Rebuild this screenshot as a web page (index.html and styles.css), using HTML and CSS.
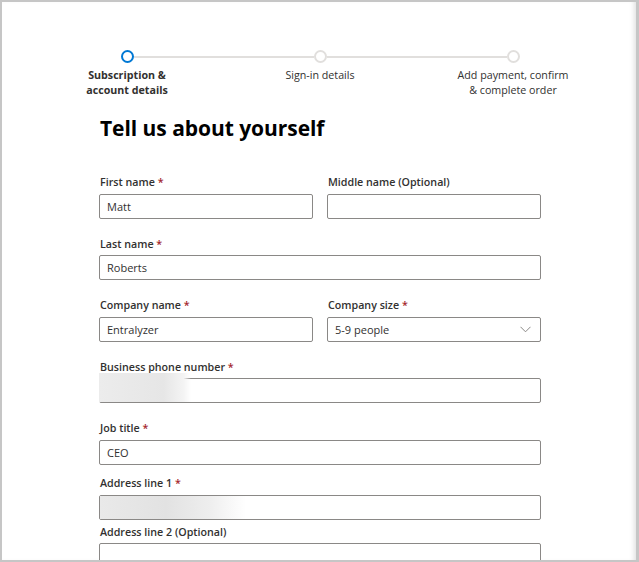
FILE: index.html
```html
<!DOCTYPE html>
<html lang="en">
<head>
<meta charset="utf-8">
<title>Tell us about yourself</title>
<link rel="stylesheet" href="styles.css">
</head>
<body>
<div class="window">
  <div class="steps">
    <div class="step active">
      <div class="track"><span class="line hidden"></span><span class="dot"></span><span class="line"></span></div>
      <div class="step-label strong">Subscription &amp;<br>account details</div>
    </div>
    <div class="step">
      <div class="track"><span class="line"></span><span class="dot"></span><span class="line"></span></div>
      <div class="step-label">Sign-in details</div>
    </div>
    <div class="step">
      <div class="track"><span class="line"></span><span class="dot"></span><span class="line hidden"></span></div>
      <div class="step-label">Add payment, confirm<br>&amp; complete order</div>
    </div>
  </div>

  <form class="form">
    <h1 class="title">Tell us about yourself</h1>

    <div class="row two">
      <div class="field">
        <label class="label">First name <span class="req">*</span></label>
        <div class="input">Matt</div>
      </div>
      <div class="field">
        <label class="label">Middle name (Optional)</label>
        <div class="input"></div>
      </div>
    </div>

    <div class="row">
      <div class="field">
        <label class="label">Last name <span class="req">*</span></label>
        <div class="input">Roberts</div>
      </div>
    </div>

    <div class="row two">
      <div class="field">
        <label class="label">Company name <span class="req">*</span></label>
        <div class="input">Entralyzer</div>
      </div>
      <div class="field">
        <label class="label">Company size <span class="req">*</span></label>
        <div class="input select">5-9 people
          <svg class="chev" width="11" height="7" viewBox="0 0 11 7"><path d="M0.5 0.8 L5.5 5.8 L10.5 0.8" fill="none" stroke="#8a8886" stroke-width="1"/></svg>
        </div>
      </div>
    </div>

    <div class="row">
      <div class="field">
        <label class="label">Business phone number <span class="req">*</span></label>
        <div class="input blurwrap"><span class="blur phone"></span></div>
      </div>
    </div>

    <div class="row tight">
      <div class="field">
        <label class="label">Job title <span class="req">*</span></label>
        <div class="input">CEO</div>
      </div>
    </div>

    <div class="row tighter">
      <div class="field">
        <label class="label">Address line 1 <span class="req">*</span></label>
        <div class="input blurwrap"><span class="blur addr"></span></div>
      </div>
    </div>

    <div class="row last">
      <div class="field">
        <label class="label">Address line 2 (Optional)</label>
        <div class="input"></div>
      </div>
    </div>
  </form>
</div>
</body>
</html>
```

FILE: styles.css
```css
* { box-sizing: border-box; }
html, body { margin: 0; padding: 0; background: #c8c8c8; }
body {
  font-family: "Open Sans", "Noto Sans", "Liberation Sans", sans-serif;
  color: #323130;
}
.window {
  width: 639px;
  height: 562px;
  background: #fff;
  border: 2px solid #c6c6c6;
  border-right-width: 3px;
  border-bottom-width: 2px;
  overflow: hidden;
  box-shadow: inset -5px 0 5px -3px rgba(0, 0, 0, 0.12);
  padding-top: 48px;
}
.steps {
  width: 579px;
  margin: 0 auto;
  display: grid;
  grid-template-columns: repeat(3, 1fr);
  transform: translateX(1px);
}
.step { display: flex; flex-direction: column; align-items: center; }
.track { display: flex; align-items: center; width: 100%; height: 13px; }
.line { flex: 1; height: 2px; background: #e1dfdd; }
.line.hidden { background: transparent; }
.dot {
  width: 13px; height: 13px; border-radius: 50%;
  border: 2px solid #e1dfdd; background: #fff;
}
.step.active .dot { border-color: #0078d4; }
.step-label {
  margin-top: 5px;
  font-size: 10.7px;
  line-height: 15px;
  text-align: center;
  color: #323130;
}
.step-label.strong { font-weight: 700; }

.form {
  width: 444px;
  margin: 0 auto;
  padding-left: 2px;
}
.title {
  margin: 16px 0 32px 1px;
  font-size: 21px;
  line-height: 28px;
  font-weight: 700;
  color: #000;
  letter-spacing: -0.05px;
}
.row { margin-bottom: 17px; }
.row.tight { margin-bottom: 10.5px; }
.row.tighter { margin-bottom: 4.5px; }
.row.last .label { margin-bottom: 2.5px; }
.row.two { display: grid; grid-template-columns: 1fr 1fr; column-gap: 14px; }
.field { display: flex; flex-direction: column; }
.label {
  font-size: 10.7px;
  line-height: 16px;
  font-weight: 600;
  color: #323130;
  margin-bottom: 3.5px;
  padding-left: 1px;
}
.req { color: #a4262c; font-weight: 600; }
.input {
  position: relative;
  height: 25px;
  border: 1px solid #8a8886;
  border-radius: 2px;
  padding: 0 7px;
  font-size: 11px;
  line-height: 23px;
  color: #323130;
  background: #fff;
}
.select { display: flex; justify-content: space-between; align-items: center; padding-right: 9px; }
.chev { display: block; }
.blur { position: absolute; display: block; }
.blur.phone {
  left: -1px; top: -6px; bottom: 0; width: 92px;
  background: linear-gradient(to right, #ececec 0%, #e6e6e6 70%, #f4f4f4 92%, rgba(255,255,255,0) 100%);
}
.blur.addr {
  left: 0; top: 0; bottom: 0; width: 146px;
  background: linear-gradient(to right, #e9e9e9 0%, #e2e2e2 45%, #eeeeee 75%, rgba(255,255,255,0) 100%);
}
```
